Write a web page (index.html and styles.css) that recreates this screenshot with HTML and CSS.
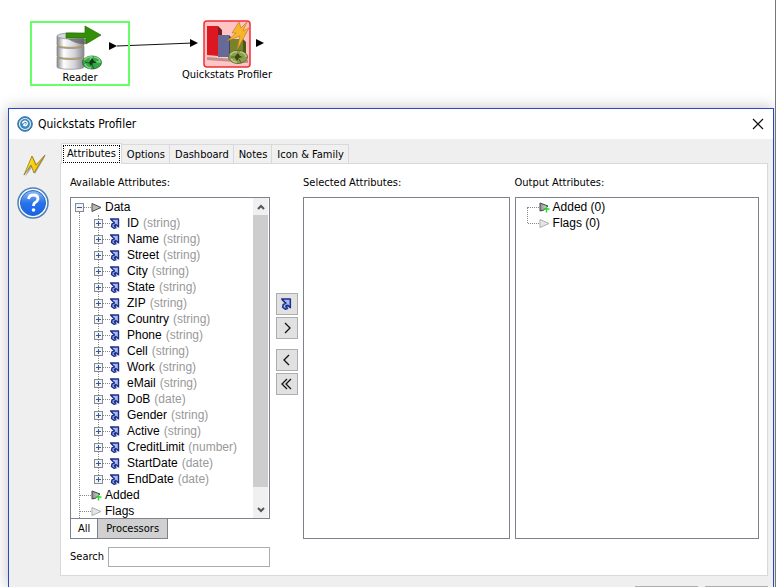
FILE: index.html
```html
<!DOCTYPE html>
<html lang="en">
<head>
<meta charset="utf-8">
<title>Quickstats Profiler</title>
<link rel="stylesheet" href="styles.css">
</head>
<body>
<svg class="defs" aria-hidden="true">
  <defs>
    <linearGradient id="metal"><stop offset="0" stop-color="#888"/><stop offset=".25" stop-color="#fff"/><stop offset=".65" stop-color="#d2d2d8"/><stop offset="1" stop-color="#88888d"/></linearGradient>
    <linearGradient id="bolt"><stop offset="0" stop-color="#ffee20"/><stop offset="1" stop-color="#eda800"/></linearGradient>
    <linearGradient id="blue" x2="0" y2="1"><stop offset="0" stop-color="#8dbcfa"/><stop offset=".5" stop-color="#2a72ea"/><stop offset="1" stop-color="#1463ef"/></linearGradient>
    <linearGradient id="tri"><stop offset="0" stop-color="#8c8c8c"/><stop offset="1" stop-color="#e0e0e0"/></linearGradient>
    <symbol id="attr" viewBox="0 0 10 11"><path d="M1 1H9V9L7 7 6 10 3 10 1.500 8 2 6 4 5Z" fill="#a9baf5"/><path d="M0 1H9M1 1.500L4 4.500M8.500 1V9.500M8.500 9L6 6.500M5 4.500L2 6 1.500 8.500 4 10.300 6.500 9.500M3.800 7.800L6 6.300M4 8L6 8.500" fill="none" stroke="#1b2f88" stroke-width="1.400"/></symbol>
    <symbol id="data" viewBox="0 0 12 10"><path d="M1 1L10 5 1 9Z" fill="#b8b8b8" stroke="#4c4c4c"/></symbol>
    <symbol id="flag" viewBox="0 0 12 10"><path d="M1 1L10 5 1 9Z" fill="#e6e6e6" stroke="#adadad"/></symbol>
    <symbol id="added" viewBox="0 0 12 11"><path d="M1 1L9 4 5 8 1 9Z" fill="url(#tri)" stroke="#444"/><path d="M7.500 4V10.500M4.500 7H10.500" stroke="#2fd436" stroke-width="1.500"/></symbol>
  </defs>
</svg>
<main class="app">
  <section class="canvas" aria-label="Process">
    <svg class="link" width="110" height="20" viewBox="0 0 110 20" aria-hidden="true"><path d="M9 11L85 8" stroke="#111" fill="none"/><path d="M1 7L9 11 1 15ZM82 4L90 8 82 12Z"/></svg>
    <div class="node reader">
      <svg width="52" height="46" viewBox="0 0 52 46" aria-hidden="true">
        <g stroke="#85858a" stroke-width=".7">
          <path d="M3 32V42C3 45 30 45 30 42V32Z" fill="url(#metal)"/><ellipse cx="16.500" cy="32" rx="13.500" ry="2.500" fill="#e0b92f"/>
          <path d="M3 21V31C3 34 30 34 30 31V21Z" fill="url(#metal)"/><ellipse cx="16.500" cy="21" rx="13.500" ry="2.500" fill="#e0b92f"/>
          <path d="M3 11V20C3 23 30 23 30 20V11Z" fill="url(#metal)"/><ellipse cx="16.500" cy="11" rx="13.500" ry="3" fill="#d8d8dc"/>
        </g>
        <path d="M14 14H32V19Q23 20 14 14Z" fill="#555" opacity=".65"/>
        <path d="M12 8H31V1L47 10 32 19V13H12Z" fill="#329006" stroke="#286c0b" stroke-width=".7"/>
        <ellipse cx="38" cy="37.500" rx="9.500" ry="6.500" fill="#37a548" stroke="#166424" stroke-width=".8"/>
        <path d="M30 35Q34 31 38 32L36 35M40 32Q46 33 46 37L42 37M31 39Q33 43 37 43" fill="none" stroke="#7ad57d" stroke-width="1.600"/>
        <path d="M36 36L38 33 40 36 43 38 39 38 37 41 35 38Z" fill="#123d18"/><path d="M38 39L40 44M31 37L35 38" stroke="#166424"/>
      </svg>
      <span>Reader</span>
    </div>
    <div class="node profiler">
      <svg width="48" height="48" viewBox="0 0 48 48" aria-hidden="true">
        <rect x="1" y="1" width="46" height="46" rx="3" fill="#ffc4c4" stroke="#f32d34" stroke-width="1.500"/>
        <path d="M4 37L45 40V43L4 40Z" fill="#c08e8e"/>
        <path d="M15 6L19 10V37L15 36Z" fill="#791b20"/><path d="M4 6H15V36L4 35Z" fill="#db1822"/>
        <path d="M15 15H26V37H15Z" fill="#676997"/><path d="M26 15L29 18V37H26Z" fill="#454566"/>
        <path d="M27 19H40V36H27Z" fill="#77822a"/><path d="M40 19L43 22V36H40Z" fill="#4e571b"/>
        <path d="M36 2L29 13 33 13 24 21 37 16 34 30 46 8 40 11 44 2 38 8Z" fill="#f6b52b" stroke="#b97b1d" stroke-width=".6"/>
        <ellipse cx="35" cy="37" rx="9.500" ry="6.500" fill="#8ba04b" stroke="#4d6122" stroke-width=".8"/>
        <path d="M27 35Q30 31 34 32M37 32Q43 33 43 37M28 39Q30 42 34 42" fill="none" stroke="#b5c579" stroke-width="1.600"/>
        <path d="M32 36L35 33 37 36 40 37 36 38 34 41 32 38Z" fill="#3c4816"/><path d="M36 39L38 43M28 37L32 37" stroke="#4d6122"/>
      </svg>
      <span>Quickstats Profiler</span>
    </div>
    <svg class="port" width="10" height="12" viewBox="0 0 10 12" aria-hidden="true"><path d="M1 2L9 6 1 10Z"/></svg>
  </section>

  <section class="dialog" role="dialog" aria-labelledby="title">
    <header class="titlebar">
      <svg width="16" height="16" viewBox="0 0 16 16" aria-hidden="true"><circle cx="8" cy="8" r="7.300" fill="#3986bc" stroke="#376f9c"/><circle cx="8" cy="8" r="5.500" fill="none" stroke="#d8edf8" stroke-width="1.200"/><path d="M5.500 7.500Q6 5 8.500 5.200 11 6 10 8.500 8.500 10.500 6.700 9.200L8.500 7.300" fill="none" stroke="#fff" stroke-width="1.400"/></svg>
      <h1 id="title">Quickstats Profiler</h1>
      <button class="close" aria-label="Close"><svg width="12" height="12" viewBox="0 0 12 12"><path d="M1 1L11 11M11 1L1 11" stroke="#111" stroke-width="1.200"/></svg></button>
    </header>
    <div class="body">
      <aside class="side">
        <button aria-label="Run"><svg width="26" height="26" viewBox="0 0 26 26"><path d="M12 5L4 25 12 14 14 22 25 3 16 13Z" fill="#777" opacity=".6"/><path d="M11 4L3 23 10 13 13 21 24 3 15 13Z" fill="url(#bolt)" stroke="#8b7620" stroke-width=".8"/></svg></button>
        <button aria-label="Help"><svg width="32" height="32" viewBox="0 0 32 32"><circle cx="16" cy="16" r="15" fill="#fff" stroke="#4b82bd" stroke-width="1.500"/><circle cx="16" cy="16" r="12.500" fill="url(#blue)" stroke="#2767bd"/><path d="M11.500 12Q12 8 16.500 8 21 8 21 12 20.500 14.500 17.500 16 16.500 17 16.500 19" fill="none" stroke="#fff" stroke-width="2.800"/><circle cx="16.500" cy="23" r="1.800" fill="#fff"/></svg></button>
      </aside>
      <div class="content">
        <nav class="tabs" role="tablist">
          <button role="tab" class="tab active" aria-selected="true"><span>Attributes</span></button>
          <button role="tab" class="tab">Options</button>
          <button role="tab" class="tab">Dashboard</button>
          <button role="tab" class="tab">Notes</button>
          <button role="tab" class="tab">Icon &amp; Family</button>
        </nav>
        <div class="panel">
          <section class="available">
            <h2>Available Attributes:</h2>
            <div class="list">
              <ul class="tree" id="tree">
                <li class="branch">
                  <div class="row"><button class="toggle" aria-label="Collapse"></button><i class="dots"></i><svg class="mark"><use href="#data"/></svg><span>Data</span></div>
                  <ul class="fields" id="fields"></ul>
                </li>
                <li class="row leaf"><i class="dots"></i><svg class="mark"><use href="#added"/></svg><span>Added</span></li>
                <li class="row leaf"><i class="dots"></i><svg class="mark"><use href="#flag"/></svg><span>Flags</span></li>
              </ul>
              <div class="scroll">
                <button aria-label="Scroll up"><svg width="8" height="6" viewBox="0 0 8 6"><path d="M1 5L4 2 7 5" fill="none" stroke="#555" stroke-width="2"/></svg></button>
                <div class="thumb"></div>
                <button class="down" aria-label="Scroll down"><svg width="8" height="6" viewBox="0 0 8 6"><path d="M1 1L4 4 7 1" fill="none" stroke="#555" stroke-width="2"/></svg></button>
              </div>
            </div>
            <div class="views"><button class="on">All</button><button>Processors</button></div>
            <div class="search"><label for="search">Search</label><input id="search" type="text"></div>
          </section>
          <div class="moves">
            <button aria-label="Add attribute"><svg width="11" height="12"><use href="#attr"/></svg></button>
            <button aria-label="Add"><svg width="10" height="12" viewBox="0 0 10 12"><path d="M3 1L8 6 3 11" fill="none" stroke="#111" stroke-width="1.300"/></svg></button>
            <button class="gap" aria-label="Remove"><svg width="10" height="12" viewBox="0 0 10 12"><path d="M7 1L2 6 7 11" fill="none" stroke="#111" stroke-width="1.300"/></svg></button>
            <button aria-label="Remove all"><svg width="12" height="12" viewBox="0 0 12 12"><path d="M6 1L1 6 6 11M10 1L5 6 10 11" fill="none" stroke="#111" stroke-width="1.300"/></svg></button>
          </div>
          <section class="selected"><h2>Selected Attributes:</h2><div class="list"></div></section>
          <section class="output">
            <h2>Output Attributes:</h2>
            <div class="list">
              <ul class="tree outputs">
                <li class="row leaf"><i class="dots"></i><svg class="mark"><use href="#added"/></svg><span>Added (0)</span></li>
                <li class="row leaf"><i class="dots"></i><svg class="mark"><use href="#flag"/></svg><span>Flags (0)</span></li>
              </ul>
            </div>
          </section>
        </div>
        <footer class="footer"><button aria-label="OK"></button><button aria-label="Cancel"></button></footer>
      </div>
    </div>
  </section>
</main>
<script src="fields.js"></script>
</body>
</html>
```
FILE: styles.css
```css
* { box-sizing: border-box; }
body { margin: 0; background: #fff; color: #000; font-family: "DejaVu Sans Condensed", "DejaVu Sans", sans-serif; font-size: 11px; line-height: 14px; }
h1, h2 { margin: 0; font-size: 11px; font-weight: normal; }
ul { list-style: none; margin: 0; padding: 0; }
button { margin: 0; padding: 0; border: 0; background: none; font: inherit; color: inherit; }
svg { display: block; flex: none; }
.defs { position: absolute; width: 0; height: 0; }
.app { height: 100vh; overflow: hidden; display: flex; flex-direction: column; border-right: 1px solid #777; }
.canvas { position: relative; height: 108px; flex: none; }
.node { position: absolute; display: flex; flex-direction: column; align-items: center; white-space: nowrap; }
.reader { left: 30px; top: 21px; width: 100px; height: 65px; border: 2px solid #66ff66; padding-top: 2px; }
.profiler { left: 172px; top: 20px; width: 110px; }
.link { position: absolute; left: 108px; top: 35px; }
.port { position: absolute; left: 255px; top: 37px; }
.dialog { position: relative; flex: 1; min-height: 0; margin: 0 1px 0 8px; display: flex; flex-direction: column; border: 1px solid #2749c4; border-bottom: 0; background: #efefef; box-shadow: 0 0 14px rgba(0, 0, 0, .25); }
.titlebar { flex: none; height: 30px; padding: 0 9px 0 8px; display: flex; align-items: center; gap: 5px; background: #fff; }
h1 { font-size: 12px; }
.close { margin-left: auto; }
.body { flex: 1; min-height: 0; display: flex; }
.side { width: 51px; padding: 13px 0 0 8px; display: flex; flex-direction: column; align-items: flex-start; gap: 9px; }
.side button:first-child { padding-left: 4px; }
.content { flex: 1; min-width: 0; display: flex; flex-direction: column; padding: 4px 5px 0 0; }
.tabs { flex: none; display: flex; align-items: flex-end; height: 20px; padding-left: 1px; }
.tab { height: 19px; padding: 2px 4px 0 5px; border: 1px solid #d9d9d9; border-width: 1px 1px 0 0; background: #f0f0f0; }
.tab.active { position: relative; height: 21px; margin-bottom: -1px; padding: 1px; border-left-width: 1px; background: #fff; }
.tab.active span { display: block; padding: 1px 3px; border: 1px dotted #000; }
.panel { flex: 1; min-height: 0; display: flex; padding: 12px 8px 8px 9px; border: 1px solid #d9d9d9; background: #fff; }
h2 { height: 21px; flex: none; }
.available, .selected, .output { display: flex; flex-direction: column; min-width: 0; }
.available { width: 200px; flex: none; }
.selected { flex: 207; margin: 0 5px 28px 0; }
.output { flex: 245; margin-bottom: 28px; }
.list { flex: 1; min-height: 0; display: flex; border: 1px solid #7d828c; overflow: hidden; background: #fff; }
.tree { position: relative; flex: 1; padding: 1px 0 0 4px; font-family: "Liberation Sans", Arial, sans-serif; font-size: 12px; }
.tree::before { content: ""; position: absolute; left: 8px; top: 14px; bottom: 0; border-left: 1px dotted #888; }
.row { position: relative; display: flex; align-items: center; height: 16px; white-space: nowrap; }
.toggle { flex: none; width: 9px; height: 9px; border: 1px solid #848b96; background: linear-gradient(#3658a2, #3658a2) center / 5px 1px no-repeat, #f4f4f4; }
.fields .toggle { background: linear-gradient(#3658a2, #3658a2) center / 5px 1px no-repeat, linear-gradient(#3658a2, #3658a2) center / 1px 5px no-repeat, #f4f4f4; }
.dots { flex: none; width: 7px; border-top: 1px dotted #888; }
.mark { width: 12px; height: 11px; margin-right: 2px; }
.leaf { padding-left: 5px; }
.leaf .dots { width: 11px; }
.fields { position: relative; padding-left: 19px; }
.fields::before { content: ""; position: absolute; left: 23px; top: 0; bottom: 8px; border-left: 1px dotted #888; }
.fields .mark { width: 10px; margin-right: 7px; }
.type { color: #999; margin-left: 4px; }
.outputs { padding-left: 7px; }
.outputs::before { left: 11px; top: 9px; bottom: auto; height: 16px; }
.scroll { width: 16px; display: flex; flex-direction: column; background: #f0f0f0; border-right: 1px solid #fff; }
.scroll button { height: 17px; flex: none; display: grid; place-items: center; }
.scroll .down { height: 17px; }
.scroll .thumb { flex: 1; margin-bottom: 14px; background: #cdcdcd; }
.views { flex: none; display: flex; height: 20px; }
.views button { padding: 0 8px; border: 1px solid #7d828c; border-top: 0; background: #d0d0d0; }
.views .on { border-right: 0; padding: 0 7px; background: #fff; }
.search { flex: none; display: flex; align-items: center; gap: 4px; margin-top: 7px; }
.search input { flex: 1; min-width: 0; height: 20px; border: 1px solid #abadb3; padding: 0 3px; font: inherit; }
.views { margin-bottom: 1px; }
.moves { width: 33px; flex: none; display: flex; flex-direction: column; align-items: center; gap: 2px; padding-top: 117px; }
.moves button { width: 22px; height: 22px; display: grid; place-items: center; border: 1px solid #adadad; background: #e1e1e1; }
.moves .gap { margin-top: 8px; }
.footer { flex: none; height: 11px; padding-top: 10px; display: flex; justify-content: flex-end; gap: 7px; overflow: hidden; }
.footer button { width: 63px; height: 23px; flex: none; border: 1px solid #adadad; background: #e1e1e1; }
```
FILE: fields.js
```js
const fields = [
  ["ID", "string"], ["Name", "string"], ["Street", "string"], ["City", "string"],
  ["State", "string"], ["ZIP", "string"], ["Country", "string"], ["Phone", "string"],
  ["Cell", "string"], ["Work", "string"], ["eMail", "string"], ["DoB", "date"],
  ["Gender", "string"], ["Active", "string"], ["CreditLimit", "number"],
  ["StartDate", "date"], ["EndDate", "date"]
];
document.getElementById("fields").innerHTML = fields.map(([name, type]) =>
  `<li class="row"><button class="toggle" aria-label="Expand ${name}"></button><i class="dots"></i><svg class="mark"><use href="#attr"/></svg><span>${name}</span><span class="type">(${type})</span></li>`
).join("");
```
